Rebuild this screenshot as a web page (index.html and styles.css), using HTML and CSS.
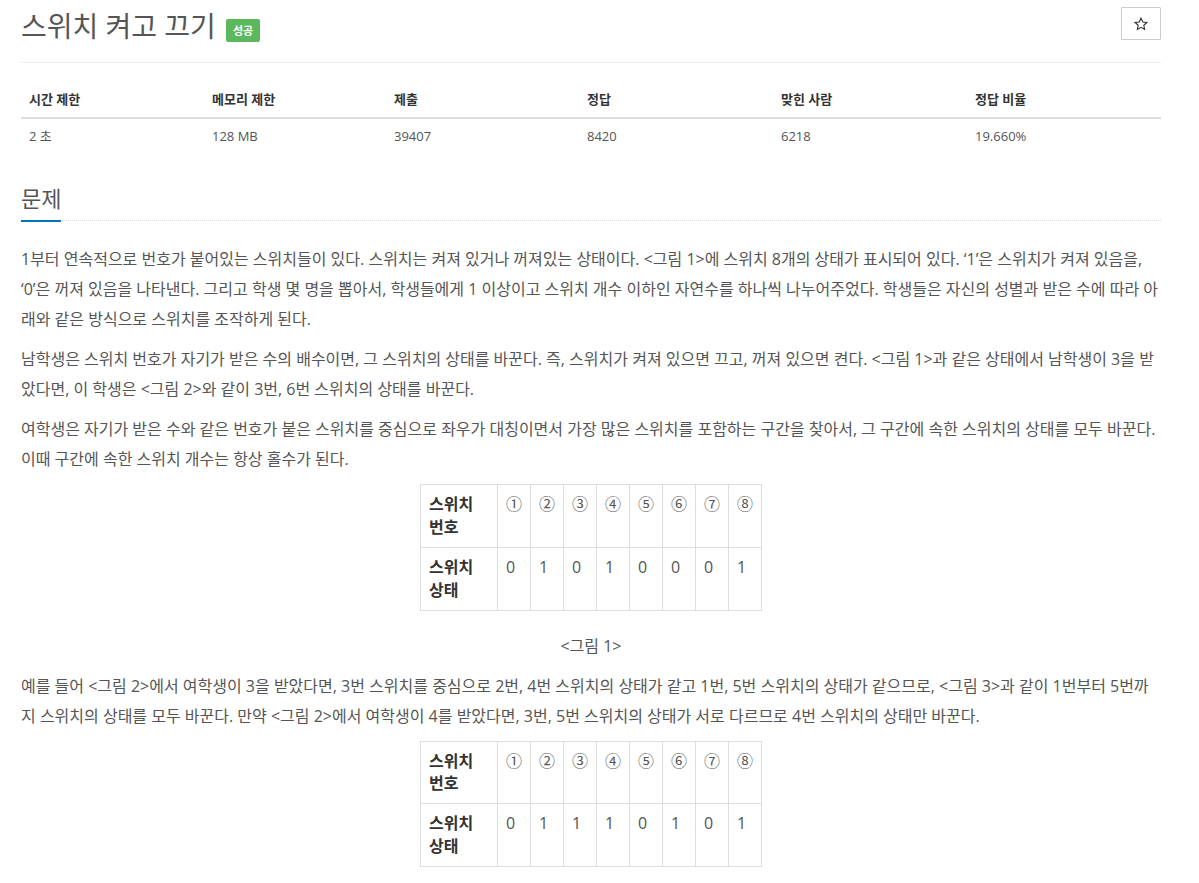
FILE: index.html
```html
<!DOCTYPE html>
<html lang="ko">
<head>
    <meta charset="utf-8">
    <title>스위치 켜고 끄기</title>
    <link rel="stylesheet" href="styles.css">
</head>
<body>
    <div class="container">
        <div class="page-header">
            <h1>
                <span class="problem-title">스위치 켜고 끄기</span>
                <span class="label label-success">성공</span>
            </h1>
            <button class="btn-star" type="button" title="즐겨찾기">
                <svg width="14" height="14" viewBox="0 0 24 24">
                    <polygon points="12,2 15,8.6 22,9.4 16.8,14.2 18.2,21.2 12,17.7 5.8,21.2 7.2,14.2 2,9.4 9,8.6" fill="none" stroke="#333" stroke-width="1.9" stroke-linejoin="miter"/>
                </svg>
            </button>
        </div>

        <hr>

        <table class="problem-info">
            <thead>
                <tr>
                    <th>시간 제한</th>
                    <th>메모리 제한</th>
                    <th>제출</th>
                    <th>정답</th>
                    <th>맞힌 사람</th>
                    <th>정답 비율</th>
                </tr>
            </thead>
            <tbody>
                <tr>
                    <td>2 초</td>
                    <td>128 MB</td>
                    <td>39407</td>
                    <td>8420</td>
                    <td>6218</td>
                    <td>19.660%</td>
                </tr>
            </tbody>
        </table>

        <section class="problem-section">
            <div class="headline">
                <h2>문제</h2>
            </div>

            <div class="problem-text">
                <p>1부터 연속적으로 번호가 붙어있는 스위치들이 있다. 스위치는 켜져 있거나 꺼져있는 상태이다. &lt;그림 1&gt;에 스위치 8개의 상태가 표시되어 있다. ‘1’은 스위치가 켜져 있음을, ‘0’은 꺼져 있음을 나타낸다. 그리고 학생 몇 명을 뽑아서, 학생들에게 1 이상이고 스위치 개수 이하인 자연수를 하나씩 나누어주었다. 학생들은 자신의 성별과 받은 수에 따라 아래와 같은 방식으로 스위치를 조작하게 된다.</p>

                <p>남학생은 스위치 번호가 자기가 받은 수의 배수이면, 그 스위치의 상태를 바꾼다. 즉, 스위치가 켜져 있으면 끄고, 꺼져 있으면 켠다. &lt;그림 1&gt;과 같은 상태에서 남학생이 3을 받았다면, 이 학생은 &lt;그림 2&gt;와 같이 3번, 6번 스위치의 상태를 바꾼다.</p>

                <p>여학생은 자기가 받은 수와 같은 번호가 붙은 스위치를 중심으로 좌우가 대칭이면서 가장 많은 스위치를 포함하는 구간을 찾아서, 그 구간에 속한 스위치의 상태를 모두 바꾼다. 이때 구간에 속한 스위치 개수는 항상 홀수가 된다.</p>

                <table class="switch-table">
                    <colgroup>
                        <col class="col-name">
                        <col span="8" class="col-num">
                    </colgroup>
                    <tbody>
                        <tr>
                            <th>스위치 번호</th>
                            <td>①</td><td>②</td><td>③</td><td>④</td><td>⑤</td><td>⑥</td><td>⑦</td><td>⑧</td>
                        </tr>
                        <tr>
                            <th>스위치 상태</th>
                            <td>0</td><td>1</td><td>0</td><td>1</td><td>0</td><td>0</td><td>0</td><td>1</td>
                        </tr>
                    </tbody>
                </table>

                <p class="figure-caption">&lt;그림 1&gt;</p>

                <p>예를 들어 &lt;그림 2&gt;에서 여학생이 3을 받았다면, 3번 스위치를 중심으로 2번, 4번 스위치의 상태가 같고 1번, 5번 스위치의 상태가 같으므로, &lt;그림 3&gt;과 같이 1번부터 5번까지 스위치의 상태를 모두 바꾼다. 만약 &lt;그림 2&gt;에서 여학생이 4를 받았다면, 3번, 5번 스위치의 상태가 서로 다르므로 4번 스위치의 상태만 바꾼다.</p>

                <table class="switch-table">
                    <colgroup>
                        <col class="col-name">
                        <col span="8" class="col-num">
                    </colgroup>
                    <tbody>
                        <tr>
                            <th>스위치 번호</th>
                            <td>①</td><td>②</td><td>③</td><td>④</td><td>⑤</td><td>⑥</td><td>⑦</td><td>⑧</td>
                        </tr>
                        <tr>
                            <th>스위치 상태</th>
                            <td>0</td><td>1</td><td>1</td><td>1</td><td>0</td><td>1</td><td>0</td><td>1</td>
                        </tr>
                    </tbody>
                </table>
            </div>
        </section>
    </div>
</body>
</html>
```

FILE: styles.css
```css
body {
    margin: 0;
    font-family: "Open Sans", "Noto Sans CJK KR", sans-serif;
    font-size: 14px;
    color: #555;
    background: #fff;
}

.container {
    width: 1140px;
    margin: 0 21px;
}

/* title row */
.page-header {
    display: flex;
    justify-content: space-between;
    align-items: flex-start;
    padding-top: 7px;
}

h1 {
    display: flex;
    align-items: flex-start;
    gap: 10px;
    margin: 4px 0 0 0;
    font-size: 28px;
    line-height: 30px;
    font-weight: normal;
    color: #555;
}

.label {
    margin-top: 8px;
    padding: 0 7px;
    font-size: 11px;
    line-height: 23px;
    font-weight: bold;
    color: #fff;
    border-radius: 2px;
}

.label-success {
    background-color: #5cb85c;
}

.btn-star {
    display: flex;
    align-items: center;
    justify-content: center;
    width: 40px;
    height: 33px;
    padding: 0;
    background: #fff;
    border: 1px solid #ccc;
    border-radius: 1px;
    cursor: pointer;
}

hr {
    margin: 20px 0 19px 0;
    border: 0;
    border-top: 1px solid #eee;
}

/* time / memory / submissions */
.problem-info {
    width: 100%;
    border-collapse: collapse;
    table-layout: fixed;
    font-size: 13px;
    line-height: 18.6px;
}

.problem-info th,
.problem-info td {
    padding: 8px;
    text-align: left;
}

.problem-info th {
    color: #333;
    font-weight: bold;
    border-bottom: 2px solid #ddd;
}

/* widths are content widths, padding comes on top */
.problem-info th:nth-child(1) { width: 167px; }
.problem-info th:nth-child(2) { width: 166px; }
.problem-info th:nth-child(3) { width: 177px; }
.problem-info th:nth-child(4) { width: 178px; }
.problem-info th:nth-child(5) { width: 178px; }

/* problem body */
.problem-section {
    margin-top: 31px;
}

.headline {
    display: flex;
    margin-bottom: 23px;
    border-bottom: 1px dotted #d5deea;
}

.headline h2 {
    margin: 0 0 -2px 0;
    padding-bottom: 8px;
    font-size: 22px;
    line-height: 28px;
    font-weight: normal;
    color: #555;
    border-bottom: 2px solid #0076c0;
}

.problem-text {
    font-size: 16px;
}

.problem-text p {
    margin: 0 0 10px 0;
    line-height: 30px;
}

.problem-text .figure-caption {
    text-align: center;
}

.switch-table {
    width: 341px;
    margin: 0 auto 20px auto;
    border-collapse: collapse;
    table-layout: fixed;
    line-height: 1.42857;
}

.switch-table .col-name {
    width: 77px;
}

.switch-table .col-num {
    width: 33px;
}

.switch-table th,
.switch-table td {
    padding: 8px;
    border: 1px solid #ddd;
    text-align: left;
    vertical-align: top;
}

.switch-table th {
    color: #333;
    font-weight: bold;
}
```
